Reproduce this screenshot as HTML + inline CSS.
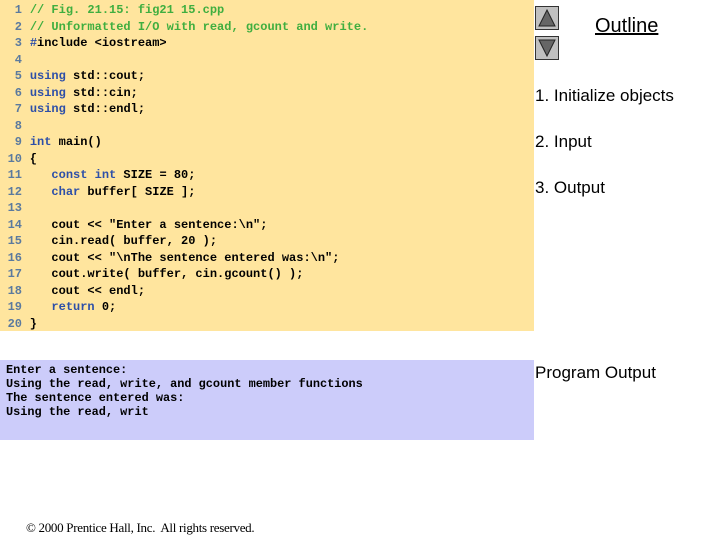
<!DOCTYPE html>
<html><head><style>
body{margin:0;width:720px;height:540px;background:#fff;position:relative;overflow:hidden;font-family:"Liberation Sans",sans-serif}
.code{position:absolute;left:0;top:0;width:534px;height:331px;background:#FFE59E}
.ln{position:absolute;left:0;width:21px;text-align:right;color:#5b7a9e}
.l{position:absolute;left:1px;font:bold 12px/16px "Liberation Mono",monospace;white-space:pre;color:#000}
.c{color:#3fae3f}.k{color:#2d4fa8}
.out{position:absolute;left:0;top:360px;width:534px;height:80px;background:#CCCCFA}
.o{position:absolute;left:6px;font:bold 11.9px/14px "Liberation Mono",monospace;white-space:pre;color:#000}
.btn{position:absolute;left:535px;width:22px;height:22px;background:#c0c0c0;border:1px solid #333}
.t{position:absolute;font-size:17px;color:#000}
</style></head><body>
<div class="code">
<div class="l" style="top:2px"><span class="ln">1</span>    <span class="c">// Fig. 21.15: fig21 15.cpp</span></div>
<div class="l" style="top:18.5px"><span class="ln">2</span>    <span class="c">// Unformatted I/O with read, gcount and write.</span></div>
<div class="l" style="top:35px"><span class="ln">3</span>    <span class="k">#</span>include &lt;iostream&gt;</div>
<div class="l" style="top:51.5px"><span class="ln">4</span></div>
<div class="l" style="top:68px"><span class="ln">5</span>    <span class="k">using</span> std::cout;</div>
<div class="l" style="top:84.5px"><span class="ln">6</span>    <span class="k">using</span> std::cin;</div>
<div class="l" style="top:101px"><span class="ln">7</span>    <span class="k">using</span> std::endl;</div>
<div class="l" style="top:117.5px"><span class="ln">8</span></div>
<div class="l" style="top:134px"><span class="ln">9</span>    <span class="k">int</span> main()</div>
<div class="l" style="top:150.5px"><span class="ln">10</span>    {</div>
<div class="l" style="top:167px"><span class="ln">11</span>       <span class="k">const int</span> SIZE = 80;</div>
<div class="l" style="top:183.5px"><span class="ln">12</span>       <span class="k">char</span> buffer[ SIZE ];</div>
<div class="l" style="top:200px"><span class="ln">13</span></div>
<div class="l" style="top:216.5px"><span class="ln">14</span>       cout &lt;&lt; "Enter a sentence:\n";</div>
<div class="l" style="top:233px"><span class="ln">15</span>       cin.read( buffer, 20 );</div>
<div class="l" style="top:249.5px"><span class="ln">16</span>       cout &lt;&lt; "\nThe sentence entered was:\n";</div>
<div class="l" style="top:266px"><span class="ln">17</span>       cout.write( buffer, cin.gcount() );</div>
<div class="l" style="top:282.5px"><span class="ln">18</span>       cout &lt;&lt; endl;</div>
<div class="l" style="top:299px"><span class="ln">19</span>       <span class="k">return</span> 0;</div>
<div class="l" style="top:315.5px"><span class="ln">20</span>    }</div>
</div>
<div class="out">
<div class="o" style="top:3px">Enter a sentence:</div>
<div class="o" style="top:17px">Using the read, write, and gcount member functions</div>
<div class="o" style="top:31px">The sentence entered was:</div>
<div class="o" style="top:45px">Using the read, writ</div>
</div>
<div class="btn" style="top:6px"><svg width="22" height="22"><polygon points="11,3 19,19 3,19" fill="#666" stroke="#222" stroke-width="1"/></svg></div>
<div class="btn" style="top:36px"><svg width="22" height="22"><polygon points="3,3 19,3 11,19" fill="#666" stroke="#222" stroke-width="1"/></svg></div>
<div class="t" style="left:595px;top:15px;font-size:20px;text-decoration:underline">Outline</div>
<div class="t" style="left:535px;top:86px">1. Initialize objects</div>
<div class="t" style="left:535px;top:132px">2. Input</div>
<div class="t" style="left:535px;top:178px">3. Output</div>
<div class="t" style="left:535px;top:363px">Program Output</div>
<div style="position:absolute;left:26px;top:520px;font:13px 'Liberation Serif',serif;letter-spacing:-0.3px">© 2000 Prentice Hall, Inc.&nbsp; All rights reserved.</div>
</body></html>
